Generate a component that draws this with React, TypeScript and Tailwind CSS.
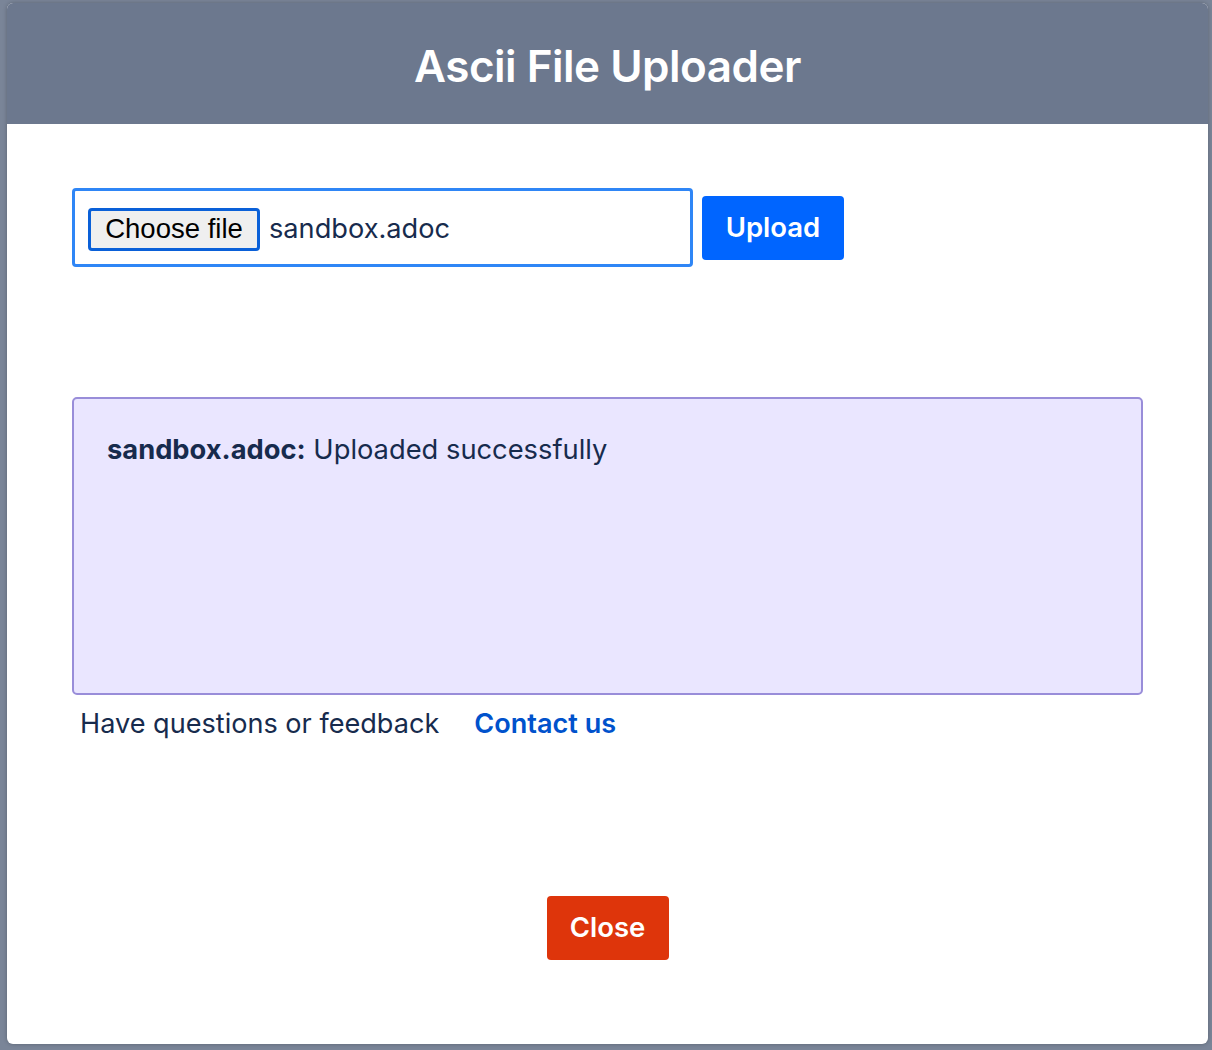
import React from 'react';

const App: React.FC = () => {
  return (
    <div className="w-[1212px] h-[1050px] bg-[#7a8598] overflow-hidden pl-[7px] pt-[3px]" style={{ fontFamily: 'Inter, "Noto Sans", sans-serif' }}>
      <div className="w-[1201px] h-[1041px] bg-white rounded-[6px] overflow-hidden flex flex-col shadow-[0_0_4px_rgba(0,0,0,0.25)]">
        <div className="h-[121px] bg-[#6c788e] flex items-center justify-center shrink-0">
          <h1 className="text-white text-[44px] font-semibold tracking-[-0.5px] pt-[4px]">Ascii File Uploader</h1>
        </div>

        <div className="flex-1 flex flex-col px-[65px] pt-[64px]">
          <div className="flex items-center gap-[9px]">
            <div className="w-[621px] h-[79px] border-[3px] border-[#2f86f6] rounded-[4px] flex items-center pl-[13px] pt-[3px]">
              <button
                className="h-[43px] w-[172px] bg-[#efefef] border-[3px] border-[#0a60d8] rounded-[4px] text-black text-[27.5px] leading-none"
                style={{ fontFamily: '"Liberation Sans", Arial, sans-serif' }}
              >
                Choose file
              </button>
              <span className="ml-[9px] text-[27.2px] text-[#172b4d]">sandbox.adoc</span>
            </div>
            <button className="h-[64px] w-[142px] bg-[#0065ff] rounded-[4px] text-white text-[27.5px] font-semibold">
              Upload
            </button>
          </div>

          <div className="mt-[130px] h-[298px] bg-[#eae6ff] border-2 border-[#998dd9] rounded-[5px] px-[33px] pt-[31px]">
            <p className="text-[27.3px] leading-[40px] text-[#172b4d]">
              <span className="font-bold">sandbox.adoc:</span> Uploaded successfully
            </p>
          </div>

          <div className="flex items-center pl-[8px] mt-[9px] text-[27.1px] leading-[40px]">
            <span className="text-[#172b4d]">Have questions or feedback</span>
            <a href="#" className="ml-[35px] text-[#0052cc] font-semibold">Contact us</a>
          </div>

          <div className="flex justify-center mt-[152px]">
            <button className="h-[64px] w-[122px] bg-[#de350b] rounded-[4px] text-white text-[27.5px] font-semibold">
              Close
            </button>
          </div>
        </div>
      </div>
    </div>
  );
};

export default App;
